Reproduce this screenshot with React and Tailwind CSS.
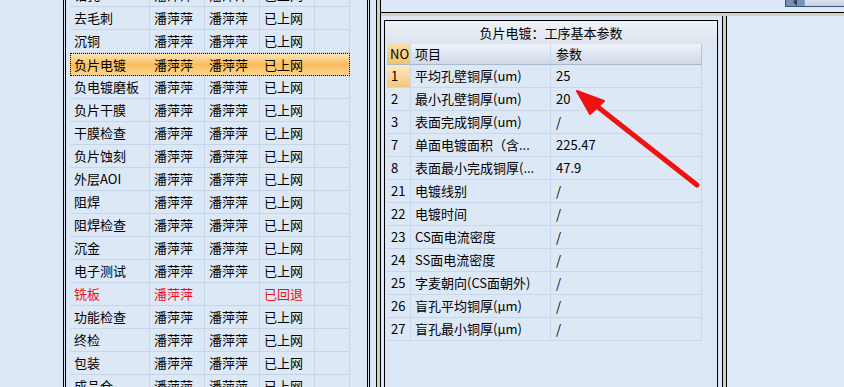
import React from 'react';

// 工序列表 (left grid)
const steps = [
    ['钻孔', '潘萍萍', '潘萍萍', '已上网'],
    ['去毛刺', '潘萍萍', '潘萍萍', '已上网'],
    ['沉铜', '潘萍萍', '潘萍萍', '已上网'],
    ['负片电镀', '潘萍萍', '潘萍萍', '已上网'],
    ['负电镀磨板', '潘萍萍', '潘萍萍', '已上网'],
    ['负片干膜', '潘萍萍', '潘萍萍', '已上网'],
    ['干膜检查', '潘萍萍', '潘萍萍', '已上网'],
    ['负片蚀刻', '潘萍萍', '潘萍萍', '已上网'],
    ['外层AOI', '潘萍萍', '潘萍萍', '已上网'],
    ['阻焊', '潘萍萍', '潘萍萍', '已上网'],
    ['阻焊检查', '潘萍萍', '潘萍萍', '已上网'],
    ['沉金', '潘萍萍', '潘萍萍', '已上网'],
    ['电子测试', '潘萍萍', '潘萍萍', '已上网'],
    ['铣板', '潘萍萍', '', '已回退'],
    ['功能检查', '潘萍萍', '潘萍萍', '已上网'],
    ['终检', '潘萍萍', '潘萍萍', '已上网'],
    ['包装', '潘萍萍', '潘萍萍', '已上网'],
    ['成品仓', '潘萍萍', '潘萍萍', '已上网'],
];

// 工序基本参数 (right grid)
const params = [
    ['1', '平均孔壁铜厚(um)', '25'],
    ['2', '最小孔壁铜厚(um)', '20'],
    ['3', '表面完成铜厚(um)', '/'],
    ['7', '单面电镀面积（含...', '225.47'],
    ['8', '表面最小完成铜厚(...', '47.9'],
    ['21', '电镀线别', '/'],
    ['22', '电镀时间', '/'],
    ['23', 'CS面电流密度', '/'],
    ['24', 'SS面电流密度', '/'],
    ['25', '字麦朝向(CS面朝外)', '/'],
    ['26', '盲孔平均铜厚(μm)', '/'],
    ['27', '盲孔最小铜厚(μm)', '/'],
];

const StepRow = ({ row, selected, back }) => {
    const cell = 'h-full flex items-center px-[4px] whitespace-nowrap overflow-hidden';
    const line = selected ? '' : 'border-r border-[#c6d5e9]';
    return (
        <div
            className={`flex w-[280px] h-[23px] ${selected
                ? 'bg-linear-to-b from-[#fee7b9] via-[#fbbd5e] to-[#fdd68f] outline-1 outline-dotted outline-black -outline-offset-1'
                : 'border-b border-[#c6d5e9]'} ${back ? 'text-[#e8101c]' : ''}`}
        >
            <div className={`${cell} ${line} w-[80px]`}>{row[0]}</div>
            <div className={`${cell} ${line} w-[55px]`}>{row[1]}</div>
            <div className={`${cell} ${line} w-[55px]`}>{row[2]}</div>
            <div className={`${cell} ${line} w-[55px]`}>{row[3]}</div>
            <div className={`${cell} ${line} w-[35px]`} />
        </div>
    );
};

const ParamRow = ({ row, current }) => (
    <div className="flex h-[23px] border-b border-[#c9d7ea]">
        <div className={`w-[24px] flex items-center pl-[4px] border-r border-[#c9d7ea] ${current ? 'bg-linear-to-b from-[#fde8c0] to-[#f7c67b]' : ''}`}>
            {row[0]}
        </div>
        <div className="w-[140px] flex items-center pl-[4px] border-r border-[#c9d7ea] whitespace-nowrap overflow-hidden">{row[1]}</div>
        <div className="w-[151px] flex items-center pl-[5px] border-r border-[#c9d7ea]">{row[2]}</div>
    </div>
);

export default function App() {
    return (
        <div className="relative w-[844px] h-[387px] overflow-hidden flex bg-[#dde8f6] text-[13px] text-black font-['Noto_Sans_CJK_SC','Noto_Sans',sans-serif]">
            {/* blank strip on the far left */}
            <div className="w-[63px] shrink-0" />

            {/* process list */}
            <div className="w-[307px] shrink-0 border-x-[3px] border-double border-black overflow-hidden">
                <div className="mt-[-16px] pl-[4px]">
                    {steps.map((row, i) => (
                        <StepRow key={row[0]} row={row} selected={i === 3} back={i === 13} />
                    ))}
                </div>
            </div>

            {/* splitter */}
            <div className="w-[6px] shrink-0" />
            <div className="w-[5px] shrink-0 border-x border-black bg-[#d4d0c8]" />

            <div className="flex-1 flex flex-col">
                {/* top strip with the bottom of a scrollbar */}
                <div className="h-[12px] flex justify-end">
                    <div className="w-[59px] h-[7px] flex border-l border-b border-[#3d5275]">
                        <div className="w-[18px] bg-[#7890b8] flex items-start justify-center">
                            <div className="w-0 h-0 border-y-[4px] border-y-transparent border-r-[4px] border-r-[#2c3f60] mt-[-2px]" />
                        </div>
                        <div className="flex-1 bg-linear-to-b from-[#dbe4ef] to-[#c4d1e2] border-l border-[#8da2c2]" />
                    </div>
                </div>
                <div className="h-[4px] border-t border-black bg-[#d4d0c8]" />

                <div className="flex-1 flex">
                    {/* parameter group box */}
                    <div className="w-[341px] shrink-0 pt-[4px] pl-[3px]">
                        <div className="w-[334px] h-full border border-b-0 border-black">
                            <div className="h-[23px] flex items-center justify-center bg-linear-to-b from-[#eef2f8] to-[#dde4ee]">
                                负片电镀：工序基本参数
                            </div>
                            <div className="pl-[2px]">
                                <div className="flex h-[21px] w-[315px] bg-linear-to-b from-[#eef3f9] to-[#cfd9e7] border-b border-[#a9bacf]">
                                    <div className="w-[24px] flex items-center pl-[3px] bg-linear-to-b from-[#f9dfa8] to-[#f2c36d] border-r border-[#c9d7ea]">NO</div>
                                    <div className="w-[140px] flex items-center pl-[4px] border-r border-[#c9d7ea]">项目</div>
                                    <div className="w-[151px] flex items-center pl-[5px] border-r border-[#b7c6da]">参数</div>
                                </div>
                                <div className="w-[315px]">
                                    {params.map((row, i) => (
                                        <ParamRow key={row[0]} row={row} current={i === 0} />
                                    ))}
                                </div>
                            </div>
                        </div>
                    </div>

                    <div className="w-[5px] shrink-0 border-x border-black bg-[#d4d0c8]" />

                    <div className="flex-1 bg-[#e1eaf7]" />
                </div>
            </div>

            {/* red annotation arrow */}
            <svg className="absolute inset-0 pointer-events-none" width="844" height="387" viewBox="0 0 844 387">
                <line x1="697" y1="185" x2="594" y2="104" stroke="#ee1212" strokeWidth="5" strokeLinecap="round" />
                <polygon points="577,91 590,114 604,101" fill="#ee1212" stroke="#ee1212" strokeWidth="2" strokeLinejoin="round" />
            </svg>
        </div>
    );
}
